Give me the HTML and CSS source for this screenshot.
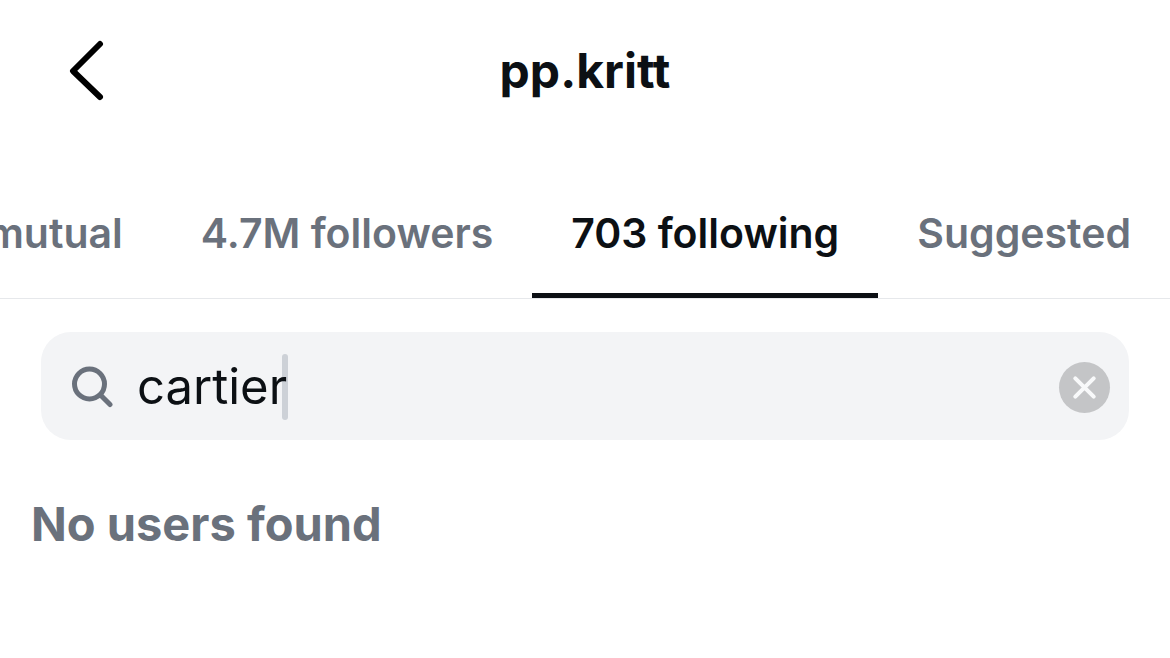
FILE: index.html
```html
<!DOCTYPE html>
<html lang="en">
<head>
<meta charset="utf-8">
<title>pp.kritt</title>
<link rel="stylesheet" href="styles.css">
</head>
<body>
<header class="header">
  <button class="back" type="button" aria-label="Back">
    <svg class="back-icon" viewBox="0 0 36 64"><path d="M32 5 5 32l27 26"/></svg>
  </button>
  <h1 class="title">pp.kritt</h1>
</header>
<nav class="tabs">
  <a class="tab" href="#mutual">mutual</a>
  <a class="tab" href="#followers">4.7M followers</a>
  <a class="tab tab-active" href="#following" aria-current="page">703 following</a>
  <a class="tab" href="#suggested">Suggested</a>
</nav>
<main class="content">
  <form class="search">
    <svg class="search-icon" viewBox="0 0 42 42"><circle cx="18.5" cy="18" r="15"/><path d="m29.5 29 9.5 9.5"/></svg>
    <div class="field">
      <input class="input" type="text" aria-label="Search" value="cartier">
      <span class="caret"></span>
    </div>
    <button class="clear" type="button" aria-label="Clear">
      <svg class="clear-icon" viewBox="0 0 50 50"><path d="m16 16 18 18M34 16 16 34"/></svg>
    </button>
  </form>
  <p class="empty">No users found</p>
</main>
</body>
</html>
```

FILE: styles.css
```css
* { box-sizing: border-box; }
body {
  margin: 0;
  overflow-x: hidden;
  background: #fff;
  color: #0c1014;
  font-family: Inter, "Liberation Sans", sans-serif;
}
button { padding: 0; border: 0; background: none; }
svg { display: block; fill: none; stroke: currentColor; }
.header {
  display: grid;
  grid-template-columns: 1fr auto 1fr;
  align-items: center;
  height: 142px;
  padding: 0 68px;
}
.back { justify-self: start; color: #000; }
.back-icon { width: 36px; height: 64px; stroke-width: 6; stroke-linecap: round; stroke-linejoin: round; }
.title { margin: 0; font-size: 48px; line-height: 60px; font-weight: 700; }
.tabs {
  display: flex;
  justify-content: flex-end;
  height: 157px;
  padding-top: 30px;
  border-bottom: 1px solid #e6e8eb;
}
.tab {
  flex: none;
  display: flex;
  align-items: center;
  padding: 0 39px;
  border-bottom: 5px solid transparent;
  color: #6a717c;
  font-size: 41px;
  font-weight: 600;
  text-decoration: none;
}
.tab-active { border-color: #0c1014; color: #0c1014; }
.content { padding: 33px 41px; }
.search {
  display: flex;
  align-items: center;
  height: 108px;
  padding: 2px 19px 0 30px;
  border-radius: 30px;
  background: #f3f4f6;
}
.search-icon { flex: none; width: 42px; height: 42px; margin-right: 24px; color: #6a717c; stroke-width: 5; stroke-linecap: round; }
.field { flex: 1; display: flex; align-items: center; }
.input {
  position: relative;
  field-sizing: content;
  padding: 0;
  border: 0;
  outline: 0;
  background: none;
  color: #0c1014;
  font: 400 49px/60px Inter, "Liberation Sans", sans-serif;
}
.caret { width: 6px; height: 66px; margin-left: -5px; border-radius: 3px; background: #cdd1d7; }
.clear { flex: none; border-radius: 50%; background: #c4c5c7; color: #f8f9fa; }
.clear-icon { width: 51px; height: 51px; stroke-width: 4; stroke-linecap: round; }
.empty { margin: 52px 0 0 -10px; color: #6a717c; font-size: 47px; line-height: 64px; font-weight: 700; }
```
